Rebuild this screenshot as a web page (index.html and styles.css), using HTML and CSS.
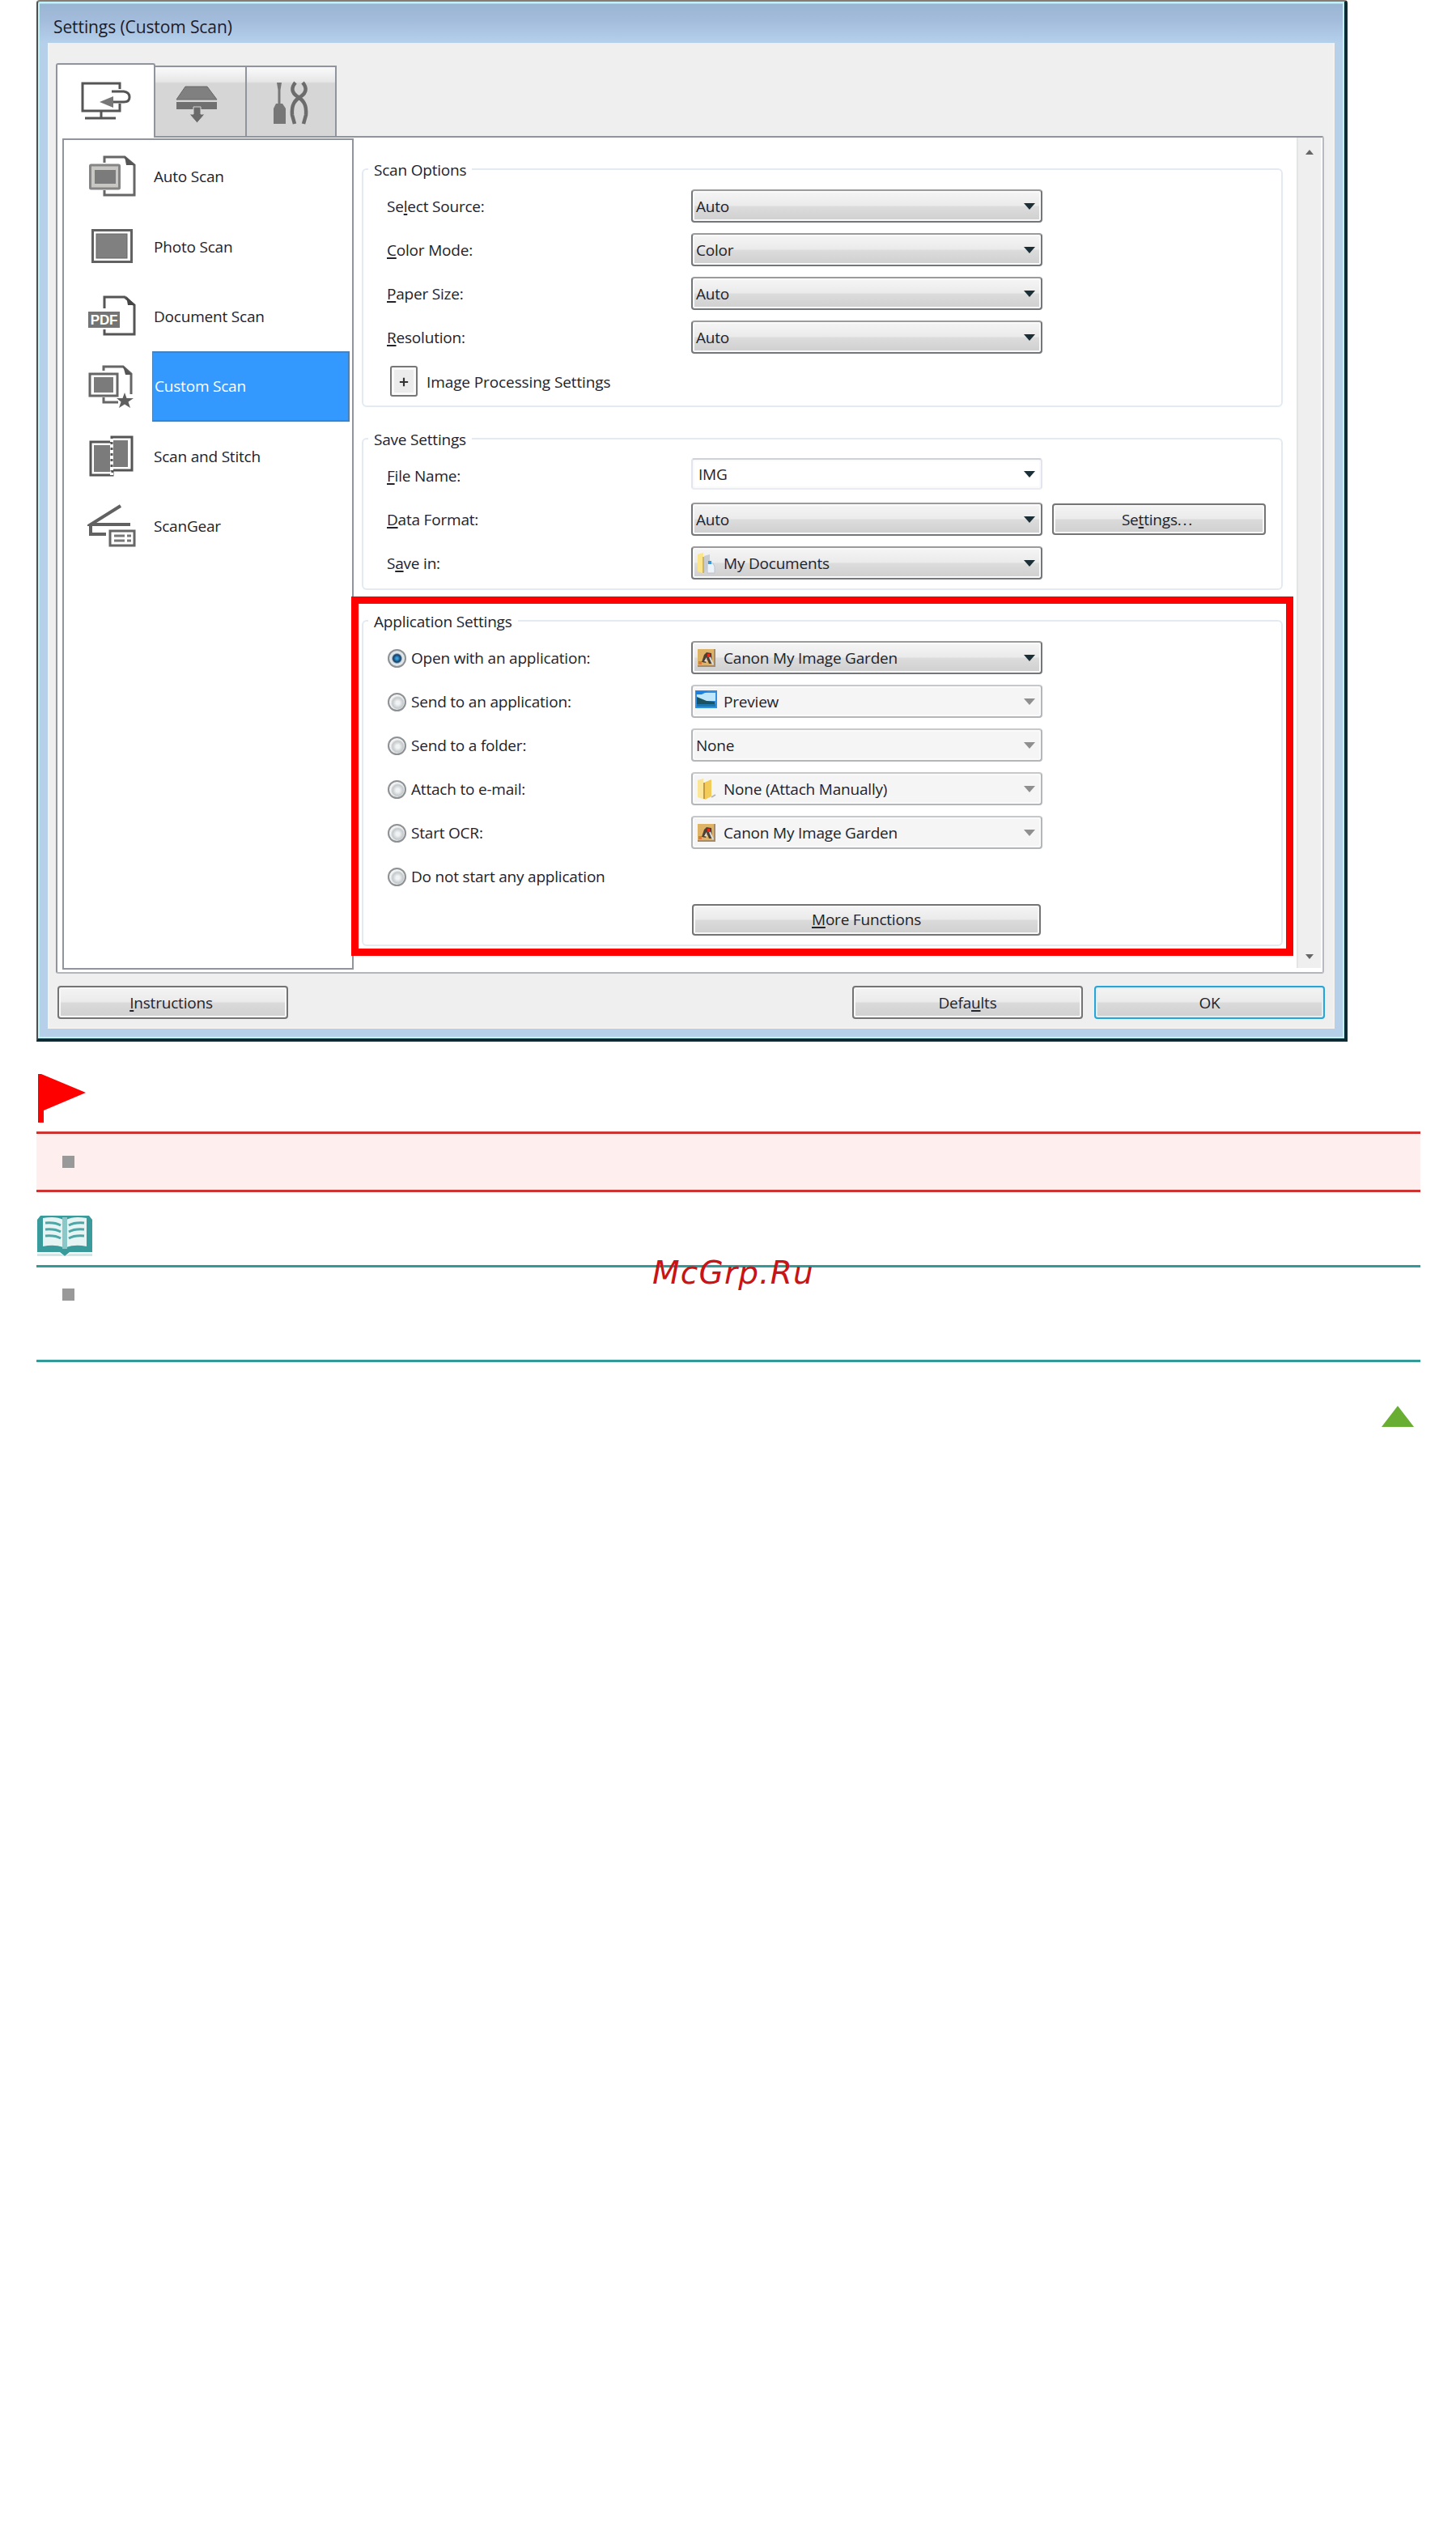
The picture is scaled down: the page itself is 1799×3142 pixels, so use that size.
FILE: index.html
```html
<!DOCTYPE html>
<html lang="en">
<head>
    <meta charset="UTF-8">
    <meta name="viewport" content="width=device-width, initial-scale=1.0">
    <title>Settings (Custom Scan)</title>
    <link rel="stylesheet" href="styles.css">
</head>
<body>
    <!-- shared shapes -->
    <svg class="defs" width="0" height="0">
        <symbol id="arrow" viewBox="0 0 14 8"><path d="M0 0H14L7 8Z" fill="currentColor"/></symbol>
        <symbol id="garden" viewBox="0 0 24 24">
            <rect x="1" y="1" width="21" height="21" fill="#dfb366"/>
            <path d="M1 22H22V1" fill="none" stroke="#a98b63" stroke-width="2"/>
            <path d="M6 17L9 8L12 5L18 6L19 19H15L13 14L11 18Z" fill="#4a4038"/>
            <path d="M9 16L12 11L13 17Z" fill="#e8dcc8"/>
            <path d="M16 11L20 20" stroke="#ddd" stroke-width="2"/>
            <rect x="13" y="7" width="3" height="4" fill="#e32a1c"/>
            <rect x="2" y="16" width="4" height="4" fill="#d97a3a"/>
        </symbol>
        <symbol id="folder" viewBox="0 0 24 28">
            <path d="M1 3L8 1V6L10 27L1 24Z" fill="#fbe596"/>
            <path d="M9 6L18 2V23L10 27Z" fill="#f3cc57"/>
            <path d="M9 6V26" stroke="#c79a3e" stroke-width="2"/>
            <path d="M18 24L23 21" stroke="#b5b5b5" stroke-width="2"/>
        </symbol>
    </svg>

    <div class="window">
        <div class="titlebar">Settings (Custom Scan)</div>
        <div class="client">
            <div class="tabs">
                <div class="tab active">
                    <svg width="66" height="52" viewBox="0 0 66 52">
                        <g fill="none" stroke="#555" stroke-width="3">
                            <path d="M50 11V4H4V38H50V29"/>
                            <path d="M40 14H55Q62 15 62 21Q62 27 55 27H40"/>
                            <path d="M27 38V46M7 47H45"/>
                        </g>
                        <path d="M25 27L42 20V34Z" fill="#777"/>
                    </svg>
                </div>
                <div class="tab scanner">
                    <svg width="54" height="48" viewBox="0 0 54 48">
                        <path d="M13 2H40L52 18H2Z" fill="#808080" stroke="#666"/>
                        <path d="M2 21H52V30H2Z" fill="#707070"/>
                        <path d="M23 27H32V36H37L27.5 47L18 36H23Z" fill="#6a6a6a" stroke="#d7d7d7"/>
                    </svg>
                </div>
                <div class="tab tools">
                    <svg width="48" height="56" viewBox="0 0 48 56">
                        <path d="M6 3H12L10.500 12V30H7.500V12Z" fill="#777"/>
                        <path d="M5 29H13L17 35V54H2V35Z" fill="#777"/>
                        <g fill="none" stroke="#6c6c6c" stroke-width="4.500">
                            <path d="M29 3C23 10 25 16 31 20C39 25 43 30 42 43L39 54"/>
                            <path d="M38 3C44 10 42 16 36 20C28 25 24 30 25 43L28 54"/>
                        </g>
                    </svg>
                </div>
            </div>

            <div class="panel">
                <div class="sidebar">
                    <div class="item">
                        <svg width="62" height="56" viewBox="0 0 62 56">
                            <path d="M21 11V4H46L58 14V51H21V45" fill="none" stroke="#666" stroke-width="3"/>
                            <path d="M46 3L59 14H48Z" fill="#555"/>
                            <rect x="3.500" y="14" width="36" height="29" rx="1" fill="#c9c7c3" stroke="#858585" stroke-width="3"/>
                            <rect x="9" y="20" width="26" height="17" fill="#7b7b7b"/>
                        </svg>
                        <span>Auto Scan</span>
                    </div>
                    <div class="item">
                        <svg width="62" height="56" viewBox="0 0 62 56">
                            <rect x="6.500" y="7.500" width="48" height="39" fill="#fff" stroke="#616161" stroke-width="3"/>
                            <rect x="11" y="12" width="38" height="30" fill="#808080" stroke="#666"/>
                        </svg>
                        <span>Photo Scan</span>
                    </div>
                    <div class="item">
                        <svg width="62" height="56" viewBox="0 0 62 56">
                            <path d="M21 18V4H46L58 14V50H21V44" fill="none" stroke="#555" stroke-width="3"/>
                            <path d="M48 3L59 14H50Z" fill="#444"/>
                            <rect x="1" y="22" width="39" height="20" fill="#747474"/>
                            <text x="20.500" y="38" text-anchor="middle" class="pdf">PDF</text>
                        </svg>
                        <span>Document Scan</span>
                    </div>
                    <div class="item selected">
                        <svg width="62" height="56" viewBox="0 0 62 56">
                            <path d="M20 9V4H44L54 13V38M20 42V48H38" fill="none" stroke="#666" stroke-width="3"/>
                            <path d="M44 3L55 14H47Z" fill="#555"/>
                            <rect x="3" y="13" width="34" height="27" fill="#fff" stroke="#666" stroke-width="3"/>
                            <rect x="8" y="17" width="24" height="19" fill="#7b7b7b"/>
                            <path d="M46 36L48.500 43H57L50.500 47.500L53 55L46 50.500L39 55L41.500 47.500L36 43H43.500Z" fill="#5f5f5f"/>
                        </svg>
                        <span>Custom Scan</span>
                    </div>
                    <div class="item">
                        <svg width="62" height="56" viewBox="0 0 62 56">
                            <rect x="4" y="10" width="27" height="41" fill="#fff" stroke="#555" stroke-width="3"/>
                            <rect x="8" y="14" width="20" height="33" fill="#7b7b7b"/>
                            <rect x="30" y="4" width="25" height="41" fill="#fff" stroke="#555" stroke-width="3"/>
                            <rect x="32" y="8" width="18" height="33" fill="#7b7b7b"/>
                            <path d="M30 6V51" stroke="#fff" stroke-width="4" stroke-dasharray="4 3"/>
                        </svg>
                        <span>Scan and Stitch</span>
                    </div>
                    <div class="item">
                        <svg width="62" height="56" viewBox="0 0 62 56">
                            <path d="M41 3L4 26H53M4 26V38H23" fill="none" stroke="#616161" stroke-width="4"/>
                            <rect x="28" y="34" width="30" height="18" fill="#fff" stroke="#666" stroke-width="3"/>
                            <path d="M33 40H46M33 46H46M49 40H54M49 46H54" stroke="#777" stroke-width="3"/>
                        </svg>
                        <span>ScanGear</span>
                    </div>
                </div>

                <div class="main">
                    <fieldset class="scan-options">
                        <legend>Scan Options</legend>
                        <div class="row">
                            <label>Se<u>l</u>ect Source:</label>
                            <div class="select">Auto<svg class="arrow"><use href="#arrow"/></svg></div>
                        </div>
                        <div class="row">
                            <label><u>C</u>olor Mode:</label>
                            <div class="select">Color<svg class="arrow"><use href="#arrow"/></svg></div>
                        </div>
                        <div class="row">
                            <label><u>P</u>aper Size:</label>
                            <div class="select">Auto<svg class="arrow"><use href="#arrow"/></svg></div>
                        </div>
                        <div class="row">
                            <label><u>R</u>esolution:</label>
                            <div class="select">Auto<svg class="arrow"><use href="#arrow"/></svg></div>
                        </div>
                        <div class="row">
                            <div class="expand">
                                <svg width="12" height="12" viewBox="0 0 14 14"><path d="M7 1V13M1 7H13" stroke="#333" stroke-width="2.500"/></svg>
                            </div>
                            <span class="processing">Image Processing Settings</span>
                        </div>
                    </fieldset>

                    <fieldset class="save-settings">
                        <legend>Save Settings</legend>
                        <div class="row">
                            <label><u>F</u>ile Name:</label>
                            <div class="select editable">IMG<svg class="arrow"><use href="#arrow"/></svg></div>
                        </div>
                        <div class="row">
                            <label><u>D</u>ata Format:</label>
                            <div class="select">Auto<svg class="arrow"><use href="#arrow"/></svg></div>
                            <div class="button settings">Se<u>t</u>tings<span class="dots">...</span></div>
                        </div>
                        <div class="row">
                            <label>S<u>a</u>ve in:</label>
                            <div class="select">
                                <svg class="icon" viewBox="0 0 24 28">
                                    <path d="M1 3L8 1V6L9 27L1 24Z" fill="#fbe58a"/>
                                    <path d="M9 5L16 3V16L9 26Z" fill="#c6ccd0"/>
                                    <path d="M8 6V26" stroke="#d0b45a" stroke-width="2"/>
                                    <path d="M13 14H20L22 18V26H13Z" fill="#eef3fa" stroke="#b9c3d2"/>
                                    <rect x="14" y="11" width="4" height="4" fill="#3d95d6"/>
                                </svg>
                                My Documents<svg class="arrow"><use href="#arrow"/></svg>
                            </div>
                        </div>
                    </fieldset>

                    <div class="highlight">
                        <fieldset class="app-settings">
                            <legend>Application Settings</legend>
                            <div class="row">
                                <label><i class="radio checked"></i>Open with an application:</label>
                                <div class="select"><svg class="icon"><use href="#garden"/></svg>Canon My Image Garden<svg class="arrow"><use href="#arrow"/></svg></div>
                            </div>
                            <div class="row">
                                <label><i class="radio"></i>Send to an application:</label>
                                <div class="select disabled">
                                    <svg class="icon preview" viewBox="0 0 27 22">
                                        <rect width="27" height="22" fill="#2f8fe0"/>
                                        <path d="M2 3H25V13H2Z" fill="#bfe6fb"/>
                                        <path d="M1 1H16L8 5H1Z" fill="#1d7fe0"/>
                                        <path d="M2 8L14 13L24 14V19H2Z" fill="#1b5360"/>
                                        <path d="M2 17H25V20H2Z" fill="#1d75ad"/>
                                    </svg>
                                    Preview<svg class="arrow"><use href="#arrow"/></svg>
                                </div>
                            </div>
                            <div class="row">
                                <label><i class="radio"></i>Send to a folder:</label>
                                <div class="select disabled">None<svg class="arrow"><use href="#arrow"/></svg></div>
                            </div>
                            <div class="row">
                                <label><i class="radio"></i>Attach to e-mail:</label>
                                <div class="select disabled"><svg class="icon"><use href="#folder"/></svg>None (Attach Manually)<svg class="arrow"><use href="#arrow"/></svg></div>
                            </div>
                            <div class="row">
                                <label><i class="radio"></i>Start OCR:</label>
                                <div class="select disabled"><svg class="icon"><use href="#garden"/></svg>Canon My Image Garden<svg class="arrow"><use href="#arrow"/></svg></div>
                            </div>
                            <div class="row">
                                <label><i class="radio"></i>Do not start any application</label>
                            </div>
                            <div class="row more">
                                <div class="button"><u>M</u>ore Functions</div>
                            </div>
                        </fieldset>
                    </div>
                </div>

                <div class="scrollbar">
                    <svg width="12" height="7" viewBox="0 0 12 7"><path d="M1 7H11L6 1Z" fill="#666"/></svg>
                    <svg width="12" height="7" viewBox="0 0 12 7"><path d="M1 0H11L6 6Z" fill="#666"/></svg>
                </div>
            </div>

            <div class="footer">
                <div class="button instructions"><u>I</u>nstructions</div>
                <div class="button defaults">Defa<u>u</u>lts</div>
                <div class="button ok">OK</div>
            </div>
        </div>
    </div>

    <svg class="flag" width="62" height="60" viewBox="0 0 62 60">
        <path d="M2 0H6L61 23L9 45V60H2Z" fill="#f00"/>
    </svg>
    <div class="note important"><span class="bullet"></span></div>

    <svg class="book" width="70" height="50" viewBox="0 0 70 50">
        <path d="M5 0H65L69 5V45H41L35 50L29 45H1V5Z" fill="#399b9b"/>
        <path d="M1 47H29L35 50H1ZM69 47H41L35 50H69Z" fill="#cfe6e6"/>
        <path d="M8 3Q24 0 33 5V39Q22 35 8 38Z" fill="#e6f4f4"/>
        <path d="M62 3Q46 0 37 5V39Q48 35 62 38Z" fill="#e6f4f4"/>
        <path d="M35 2V41" stroke="#8cc8c8" stroke-width="6"/>
        <path d="M11 9Q23 8 30 12M11 17Q23 16 30 20M11 25Q23 24 30 28M59 9Q47 8 40 12M59 17Q47 16 40 20M59 25Q47 24 40 28" fill="none" stroke="#4ea6a6" stroke-width="3"/>
    </svg>
    <div class="note reference">
        <span class="bullet"></span>
        <span class="watermark">McGrp.Ru</span>
    </div>

    <div class="top-link">
        <svg width="42" height="27" viewBox="0 0 42 27"><path d="M21 0L41 26H1Z" fill="#67ae33"/></svg>
    </div>
</body>
</html>
```

FILE: styles.css
```css
* {
    box-sizing: border-box;
}

body {
    margin: 0;
    padding: 0 44px 0 45px;
    background-color: #fff;
    font-family: "Open Sans", "Noto Sans", sans-serif;
    font-size: 19px;
    letter-spacing: -0.2px;
    color: #23232b;
}

svg {
    display: block;
    flex: none;
}

.defs {
    position: absolute;
}

u {
    text-decoration-thickness: 2px;
    text-underline-offset: 2px;
}

/* window frame */
.window {
    width: 1620px;
    height: 1287px;
    border-style: solid;
    border-width: 2px 4px 4px 2px;
    border-color: #8a7c72 #0f2a33 #0f2a33 #4a4f52;
    border-radius: 4px 4px 0 0;
    background-color: #b7d0ea;
    box-shadow: inset 0 0 0 2px #c0f2fa;
}

.titlebar {
    height: 51px;
    margin: 0 2px;
    padding-left: 17px;
    line-height: 63px;
    font-size: 21px;
    letter-spacing: -0.1px;
    color: #1c1c2c;
    background: linear-gradient(#c0f2fa 2px, #9ab5d3 3px, #a3bcdb 45%, #b4d0eb);
}

.client {
    width: 1590px;
    height: 1218px;
    margin-left: 12px;
    background-color: #efefef;
    border: 2px solid #f5f1ee;
    border-top: 0;
    padding: 0 8px;
}

/* tabs */
.tabs {
    display: flex;
    align-items: flex-end;
    height: 115px;
}

.tab {
    display: flex;
    justify-content: center;
    align-items: center;
    width: 113px;
    height: 87px;
    border: 2px solid #8f949d;
    border-left-width: 0;
    border-bottom: 0;
    background: linear-gradient(#f8f8f8 2px, #e6e6e6 18px, #d6d6d6 20px, #d6d6d6);
}

.tab.active {
    width: 123px;
    height: 92px;
    margin-bottom: -2px;
    border-left-width: 2px;
    border-radius: 3px 3px 0 0;
    background: #fff;
    position: relative;
}

.scanner {
    padding: 6px 9px 0 0;
}

.tools {
    width: 111px;
    padding: 2px 0 0 1px;
}

/* main panel */
.panel {
    display: flex;
    width: 1567px;
    height: 1035px;
    border: 2px solid #8f949d;
    border-right-color: #b9bac1;
    border-bottom-color: #b4b6bc;
    border-radius: 0 3px 3px 3px;
    background-color: #fff;
}

.sidebar {
    width: 360px;
    height: 1027px;
    margin: 1px 0 0 6px;
    padding-top: 2px;
    border: 2px solid #8f949d;
    flex: none;
}

.item {
    display: flex;
    align-items: center;
    height: 86.4px;
}

.item svg {
    margin: 0 18px 0 29px;
}

.item span {
    width: 244px;
    line-height: 86px;
    padding-left: 2px;
}

.selected span {
    color: #fff;
    background-color: #3399ff;
    border: 2px solid #4a80b8;
    border-left-width: 1px;
    line-height: 83px;
}

.pdf {
    font: bold 17px "Liberation Sans", sans-serif;
    fill: #fff;
}

.main {
    width: 1165px;
    padding: 26px 0 0 10px;
    flex: none;
}

fieldset {
    width: 1138px;
    margin: 0;
    padding: 5px 0 0 29px;
    border: 2px solid #e3eaf2;
    border-radius: 6px;
}

legend {
    height: 26px;
    line-height: 28px;
    margin-left: -23px;
    padding: 0 7px;
}

.scan-options {
    height: 307px;
    margin-bottom: 26px;
}

.save-settings {
    height: 200px;
}

.app-settings {
    height: 415px;
}

.highlight {
    width: 1164px;
    height: 444px;
    margin: 8px 0 0 -13px;
    padding: 8px 0 0 4px;
    border: 9px solid #f00;
    position: relative;
}

.row {
    display: flex;
    align-items: center;
    height: 54px;
}

.row label {
    display: flex;
    align-items: center;
    white-space: pre;
    width: 376px;
    padding-top: 2px;
    flex: none;
}

.select {
    display: flex;
    align-items: center;
    width: 434px;
    height: 41px;
    padding: 1px 7px 0 4px;
    border: 2px solid #74777a;
    border-top-color: #9b9b9b;
    border-radius: 4px;
    background: linear-gradient(#f5f5f5, #ebebeb 48%, #dcdcdc 52%, #cfcfcf);
    box-shadow: inset 0 0 0 2px #fafafa;
}

.select .arrow {
    width: 14px;
    height: 8px;
    margin-left: auto;
    color: #1d2f36;
}

.select .icon {
    width: 24px;
    height: 28px;
    margin: 0 9px 0 1px;
}

.select .preview {
    width: 27px;
    height: 22px;
    margin: -5px 8px 0 -1px;
}

.select.editable {
    height: 39px;
    padding-left: 7px;
    padding-bottom: 1px;
    margin-top: -3px;
    border-color: #cfd1d8 #e2e4ef #e9ebf5;
    background: #fff;
}

.select.disabled {
    border-color: #c6c8ca #b4b7ba #b4b7ba;
    background: #f5f5f5;
}

.disabled .arrow {
    color: #8f8f8f;
}

.button {
    display: flex;
    justify-content: center;
    align-items: center;
    white-space: pre;
    height: 39px;
    border: 2px solid #747474;
    border-radius: 4px;
    background: linear-gradient(#f4f4f4, #ebebeb 48%, #dadada 52%, #d0d0d0);
    box-shadow: inset 0 0 0 2px #f8f8f8;
}

.settings {
    width: 264px;
    margin-left: 12px;
    padding: 1px 3px 0 0;
}

.dots {
    letter-spacing: 1.8px;
}

.more .button {
    width: 431px;
    margin-left: 377px;
}

.expand {
    display: flex;
    justify-content: center;
    align-items: center;
    width: 34px;
    height: 38px;
    margin: 2px 11px 0 4px;
    padding-top: 2px;
    border: 2px solid #777;
    border-radius: 3px;
    background-color: #ececec;
    box-shadow: inset 0 0 0 3px #fafafa;
}

.processing {
    padding-top: 3px;
    letter-spacing: -0.1px;
}

.radio {
    width: 23px;
    height: 23px;
    margin: 0 6px 0 1px;
    border: 2px solid #8d9194;
    border-radius: 50%;
    background: radial-gradient(circle at 55% 55%, #f0f2f3 15%, #c4c9cc 45%, #f4f4f4 60%);
}

.radio.checked {
    background: radial-gradient(circle at 50% 50%, #38a0dc 8%, #123c66 35%, #dfe6ea 50%);
}

.scrollbar {
    display: flex;
    flex-direction: column;
    justify-content: space-between;
    align-items: center;
    width: 30px;
    height: 1026px;
    padding: 14px 0 10px;
    border-left: 2px solid #e3e5e4;
    background-color: #efefef;
}

/* dialog buttons */
.footer {
    display: flex;
    padding: 15px 0 0 2px;
}

.footer .button {
    width: 285px;
    height: 41px;
}

.footer .instructions {
    padding-right: 4px;
}

.footer .defaults {
    margin-left: 697px;
}

.footer .ok {
    margin-left: 14px;
    border-color: #2aa3d5;
    box-shadow: inset 0 0 0 2px #d8f2fb;
}

/* notes under the window */
.flag {
    margin: 40px 0 11px;
}

.note {
    padding-left: 32px;
    border-top: 3px solid;
    border-bottom: 3px solid;
}

.important {
    height: 75px;
    padding-top: 27px;
    border-color: #cc3333;
    background-color: #ffeeee;
}

.book {
    margin: 29px 0 11px;
}

.reference {
    height: 120px;
    padding-top: 26px;
    border-color: #339999;
    position: relative;
}

.bullet {
    display: block;
    width: 15px;
    height: 15px;
    background-color: #999;
}

/* stamped across the top rule */
.watermark {
    position: absolute;
    top: -16px;
    left: 761px;
    line-height: 46px;
    font-family: "DejaVu Sans", sans-serif;
    font-style: italic;
    font-size: 39px;
    letter-spacing: 1.2px;
    color: #c81414;
}

.top-link {
    display: flex;
    justify-content: flex-end;
    padding: 54px 7px 0 0;
}
```
